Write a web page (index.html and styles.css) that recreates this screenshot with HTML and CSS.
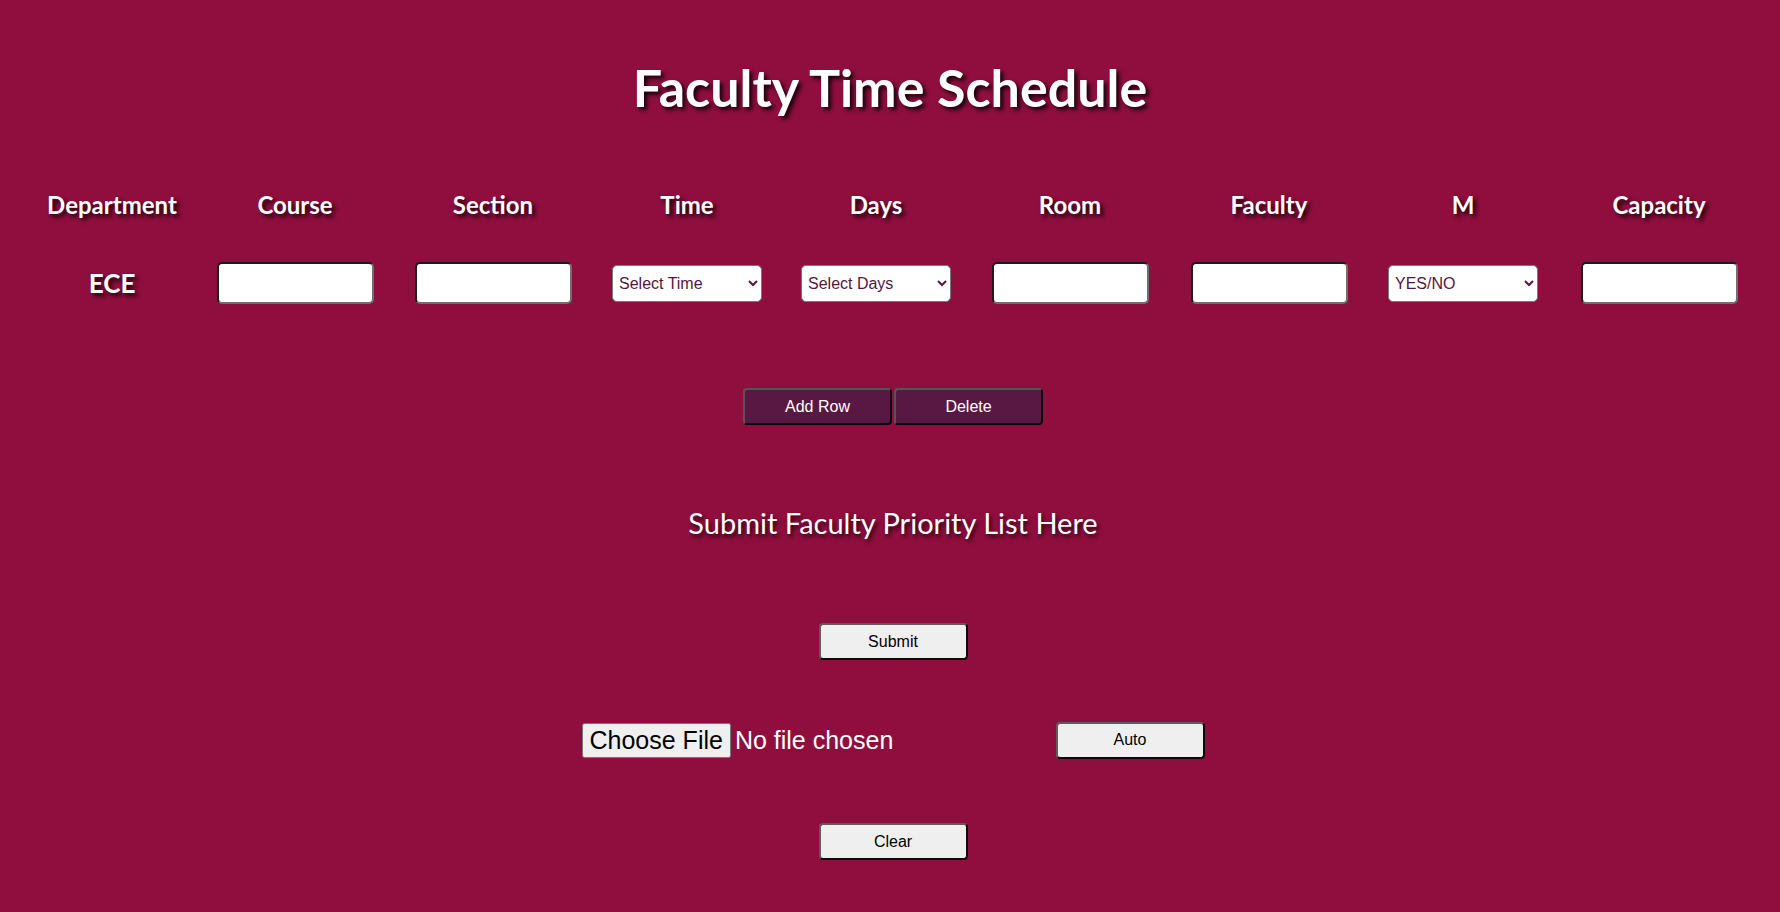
FILE: index.html
```html
<!DOCTYPE html>
<html lang="en">
<head>
<meta charset="utf-8">
<title>Faculty Time Schedule</title>
<link rel="stylesheet" href="styles.css">
</head>
<body>
<main class="page">
  <h1 class="title">Faculty Time Schedule</h1>

  <div class="schedule">
    <div class="head">Department</div>
    <div class="head">Course</div>
    <div class="head">Section</div>
    <div class="head">Time</div>
    <div class="head">Days</div>
    <div class="head">Room</div>
    <div class="head">Faculty</div>
    <div class="head">M</div>
    <div class="head">Capacity</div>

    <div class="cell dept">ECE</div>
    <div class="cell"><input class="field" type="text"></div>
    <div class="cell"><input class="field" type="text"></div>
    <div class="cell"><select class="pick"><option>Select Time</option></select></div>
    <div class="cell"><select class="pick"><option>Select Days</option></select></div>
    <div class="cell"><input class="field" type="text"></div>
    <div class="cell"><input class="field" type="text"></div>
    <div class="cell"><select class="pick"><option>YES/NO</option></select></div>
    <div class="cell"><input class="field" type="text"></div>
  </div>

  <div class="row-actions">
    <button class="btn-dark" type="button">Add Row</button><button class="btn-dark" type="button">Delete</button>
  </div>

  <h2 class="subtitle">Submit Faculty Priority List Here</h2>

  <div class="centered submit-row">
    <button class="btn-light" type="button">Submit</button>
  </div>

  <div class="file-row">
    <input class="file" type="file">
    <button class="btn-light" type="button">Auto</button>
  </div>

  <div class="centered clear-row">
    <button class="btn-light" type="button">Clear</button>
  </div>
</main>
</body>
</html>
```

FILE: styles.css
```css
html, body {
  margin: 0;
  padding: 0;
  background: #8f0e3e;
}

body {
  font-family: Lato, "Open Sans", sans-serif;
  color: #ffffff;
  min-height: 912px;
}

.page {
  display: flex;
  flex-direction: column;
}

.title {
  margin: 56px 0 0;
  font-size: 52px;
  line-height: 62px;
  font-weight: 700;
  text-align: center;
  text-shadow: 3px 3px 4px rgba(0, 0, 0, 0.85);
}

.schedule {
  margin-top: 72px;
  padding-left: 28px;
  display: grid;
  grid-template-columns: 168px 198px 198px 190px 188px 200px 198px 190px 202px;
  grid-template-rows: 30px 44px;
  row-gap: 41px;
}

.head {
  font-size: 24px;
  font-weight: 700;
  line-height: 30px;
  text-align: center;
  text-shadow: 3px 3px 4px rgba(0, 0, 0, 0.85);
}

.cell {
  display: flex;
  align-items: center;
  justify-content: center;
}

.dept {
  font-size: 26px;
  font-weight: 700;
  text-shadow: 3px 3px 4px rgba(0, 0, 0, 0.85);
}

.field {
  box-sizing: border-box;
  width: 157px;
  height: 42px;
  margin: 0;
  background: #ffffff;
  border-style: solid;
  border-width: 2px;
  border-color: #1c1c1c #6f6f6f #6f6f6f #1c1c1c;
  border-radius: 5px;
  font-family: "Liberation Sans", Arial, sans-serif;
  font-size: 16px;
}

.pick {
  box-sizing: border-box;
  width: 150px;
  height: 37px;
  margin: 0;
  padding: 0 2px;
  background: #ffffff;
  border: 1px solid #7a7a7a;
  border-radius: 5px;
  color: #561640;
  font-family: "Liberation Sans", Arial, sans-serif;
  font-size: 16px;
}

.row-actions {
  margin-top: 83px;
  padding-left: 6px;
  display: flex;
  justify-content: center;
  gap: 2px;
}

.btn-dark,
.btn-light {
  box-sizing: border-box;
  width: 149px;
  height: 37px;
  margin: 0;
  border-style: solid;
  border-width: 2px;
  border-radius: 4px;
  font-family: "Liberation Sans", Arial, sans-serif;
  font-size: 16px;
  cursor: pointer;
}

.btn-dark {
  background: #581843;
  color: #ffffff;
  border-color: #555555 #0a0a0a #0a0a0a #555555;
}

.btn-light {
  background: #efefef;
  color: #000000;
  border-color: #5c5c5c #0a0a0a #0a0a0a #5c5c5c;
}

.subtitle {
  margin: 80px 0 0;
  padding-left: 6px;
  font-size: 29px;
  line-height: 36px;
  font-weight: 400;
  text-align: center;
  text-shadow: 2px 3px 4px rgba(0, 0, 0, 0.75);
}

.centered {
  display: flex;
  justify-content: center;
  padding-left: 6px;
}

.submit-row {
  margin-top: 82px;
}

.file-row {
  margin-top: 61px;
  padding-left: 6px;
  display: flex;
  justify-content: center;
  align-items: center;
  gap: 144px;
  height: 38px;
}

.file {
  width: 330px;
  color: #ffffff;
  font-family: "Liberation Sans", Arial, sans-serif;
  font-size: 25px;
}

.clear-row {
  margin-top: 64px;
}
```
